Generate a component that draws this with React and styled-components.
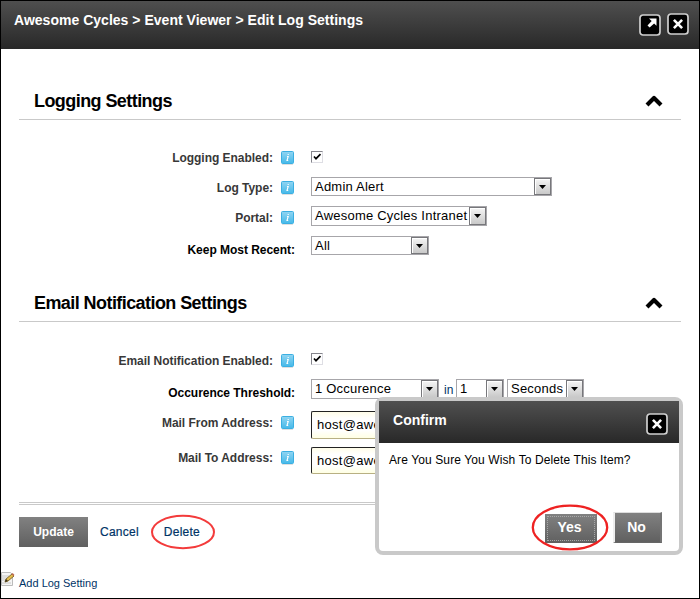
import React from 'react';
import styled, { createGlobalStyle } from 'styled-components';

const Global = createGlobalStyle`
  * { box-sizing: border-box; }
  body { margin: 0; background: #fff; font-family: "Liberation Sans", Arial, sans-serif; font-size: 12px; }
`;
const Page = styled.main`
  position: relative; width: 700px; height: 599px; border: 1px solid #000;
  background: #fff; overflow: hidden; display: flex; flex-direction: column;
`;
const TitleBar = styled.header`
  height: 48px; flex: none; display: flex; justify-content: space-between;
  padding: 12px 10px 0 13px; background: linear-gradient(#4f4f4f, #282828);
`;
const Title = styled.h1`
  margin: 0; color: #fff; font-size: 14px; line-height: 15px; font-weight: bold;
  letter-spacing: .02px; white-space: nowrap;
`;
const Tools = styled.div`display: flex; gap: 6px;`;
const IconButton = styled.button`
  width: 22px; height: 22px; padding: 0; border: 0; background: none;
  margin-top: ${p => p.$drop || 0}px; svg { display: block; }
`;
const Content = styled.div`padding: 0 18px; width: 698px;`;
const SectionHead = styled.div`
  display: flex; justify-content: space-between; height: 34px;
  margin-top: ${p => p.$top}px; padding: 4px 18px 0 15px; border-bottom: 1px solid #c9c9c9;
  svg { margin-top: 4px; }
`;
const Heading = styled.h2`
  margin: 0; font-size: 18px; line-height: 22px; color: #000; letter-spacing: -.57px; white-space: nowrap;
`;
const Fields = styled.div`padding-top: ${p => p.$top}px;`;
const Row = styled.div`display: flex; height: ${p => p.$height}px; align-items: flex-start;`;
const Label = styled.label`
  flex: none; width: ${p => p.$plain ? 276 : 254}px; margin-right: ${p => p.$plain ? 16 : 8}px; padding-top: ${p => p.$drop || 0}px;
  text-align: right; font-weight: bold; line-height: 14px; white-space: nowrap;
  color: ${p => p.$plain ? '#000' : '#383838'}; letter-spacing: -.03px;
`;
const InfoSlot = styled.span`flex: none; width: 30px; padding-top: ${p => p.$drop || 0}px; svg { display: block; }`;
const Check = styled.span`
  width: 12px; height: 12px; border: 1px solid #dedee4; border-top-color: #85858c; border-left-color: #85858c;
  svg { display: block; }
`;
const SelectBox = styled.div`
  flex: none; display: flex; justify-content: space-between; width: ${p => p.$width}px; height: ${p => p.$height || 19}px;
  border: 1px solid #a7a6aa; background: #fff; color: #000; font-size: 13px; line-height: ${p => p.$height === 20 ? 18 : 17}px;
  padding-left: 3px; white-space: nowrap; letter-spacing: .22px;
`;
const Arrow = styled.span`
  width: 17px; border: 1px solid #77777b; background: linear-gradient(#f5f5f5, #c9c9c9);
  box-shadow: inset 1px 1px #fff; display: flex; align-items: center; justify-content: center;
`;
const Threshold = styled.div`display: flex; align-items: flex-start;`;
const LastField = styled.div`margin-left: 3px;`;
const Between = styled.span`width: 17px; padding: 4px 0 0 5px; font-size: 12px; line-height: 14px; color: #003366;`;
const Email = styled.div`
  width: 80px; height: ${p => p.$height}px; border: 1px solid #b8b083; border-top-color: #222; border-left-color: #222;
  border-radius: 2px; padding: 5px 5px; font-size: 13px; line-height: 15px; letter-spacing: .3px;
  background: linear-gradient(#fffde9, #fff 25%, #fff 70%, #ffffe3);
`;
const Actions = styled.div`
  border-top: 3px double #c9c9c9; height: 70px; padding-top: 12px; display: flex; align-items: flex-start;
`;
const ActionButton = styled.button`
  width: ${p => p.$width}px; height: 30px; padding: 0; border: 0; color: #fff;
  background: linear-gradient(#818181, #606060); font: bold ${p => p.$size || 12}px "Liberation Sans", Arial, sans-serif;
`;
const ActionLink = styled.a`
  position: relative; margin-left: ${p => p.$left}px; margin-top: 8px; line-height: 14px; color: #003366;
  letter-spacing: .25px; -webkit-text-stroke: .2px #003366;
`;
const Ring = styled.svg`position: absolute; overflow: visible; pointer-events: none; left: ${p => p.$left}px; top: ${p => p.$top}px;`;
const AddLink = styled.a`
  display: flex; align-items: flex-start; gap: 4px; color: #003366; font-size: 11px; line-height: 14px;
  svg { flex: none; margin-top: -1px; } span { padding-top: 4px; }
`;
const Dialog = styled.section`
  position: absolute; left: 374px; top: 396px; width: 308px; height: 158px; border: 4px solid #c9c9c9;
  border-radius: 8px; background: #fff;
`;
const DialogHeader = styled.div`
  height: 42px; display: flex; justify-content: space-between; padding: 12px 11px 0 14px;
  background: linear-gradient(#505050, #282828);
`;
const Message = styled.p`margin: 10px 0 0 10px; line-height: 14px; color: #000; letter-spacing: .11px; white-space: nowrap;`;
const DialogActions = styled.div`display: flex; justify-content: flex-end; gap: 16px; padding: 45px 17px 0 0;`;
const YesWrap = styled.div`position: relative; padding-top: 2px;`;
const YesButton = styled(ActionButton)`height: 29px; outline: 1px dotted #a8a8a8; outline-offset: -3px; padding: 0 3px 3px 0;`;
const NoButton = styled(ActionButton)`
  height: 31px; border: 1px solid #666; border-top-color: #ddd; border-left: 2px solid #eee;
  border-right: 2px solid #747474; padding: 0 2px 2px 0;
`;

const Chevron = () => <svg width="18" height="13" viewBox="0 0 18 13"><path d="m2 11 7-7 7 7" fill="none" stroke="#000" strokeWidth="4.2" strokeLinejoin="round" /></svg>;
const Close = () => <svg width="22" height="22"><rect x="1" y="1" width="20" height="20" rx="3" fill="#000" stroke="#cfcfcf" strokeWidth="1.7" /><path d="m6.9 6.9 8.2 8.2m0-8.2-8.2 8.2" stroke="#fff" strokeWidth="2.6" /></svg>;
const Expand = () => <svg width="22" height="22"><rect x="1" y="1" width="20" height="20" rx="3" fill="#000" stroke="#cfcfcf" strokeWidth="1.7" /><path d="M10 4.5h7.5v7.2l-2.4-2.2-4.5 4.1-2.1-2.1 4.2-4.4Z" fill="#fff" /></svg>;
const Info = () => (
  <svg width="13" height="14">
    <defs><linearGradient id="infoBlue" x1="0" y1="0" x2="0" y2="1"><stop stopColor="#91d5f2" /><stop offset="1" stopColor="#45b9e9" /></linearGradient></defs>
    <path d="M1 13.5h11" stroke="#e0e0e0" />
    <rect x=".5" y=".5" width="12" height="12" rx="1" fill="url(#infoBlue)" stroke="#3bafe2" />
    <path d="M6 5.5h1.2L6 9.5h1.2M7.2 3v1" fill="none" stroke="#fff" strokeWidth="1.1" />
  </svg>
);
const Tick = () => <svg width="10" height="10"><path d="m2 4.5 2 2.2L8.5 2.2" fill="none" stroke="#000" strokeWidth="1.7" /></svg>;
const Pencil = () => (
  <svg width="14" height="16" viewBox="0 0 14 16">
    <path d="M.5 1.5h9l2 2v11H.5Z" fill="#f5f5f5" stroke="#bbb" /><path d="M1 5h7M1 7h5M1 9h4M1 12h9" stroke="#c8c8c8" />
    <path d="m4 11 1-3 6-5 2 2-6 5Z" fill="#e4bd4c" stroke="#836b31" /><path d="m4 11 1-3 2 2Z" fill="#3b3521" />
    <path d="m10.5 3 1.2-1 1.8 2-1.3 1Z" fill="#c16b52" />
  </svg>
);

function Select({ children, ...rest }) {
  return <SelectBox {...rest}><span>{children}</span><Arrow><svg width="7" height="4"><path d="M0 0h7L3.5 4Z" /></svg></Arrow></SelectBox>;
}
function InfoLabel({ children, drop = 0 }) {
  return <><Label $drop={drop}>{children}</Label><InfoSlot $drop={drop}><Info /></InfoSlot></>;
}

export default function App() {
  return (
    <>
      <Global />
      <Page>
        <TitleBar>
          <Title>Awesome Cycles &gt; Event Viewer &gt; Edit Log Settings</Title>
          <Tools><IconButton $drop={1}><Expand /></IconButton><IconButton><Close /></IconButton></Tools>
        </TitleBar>
        <Content>
          <SectionHead $top={37}><Heading>Logging Settings</Heading><Chevron /></SectionHead>
          <Fields $top={31}>
            <Row $height={26}><InfoLabel>Logging Enabled:</InfoLabel><Check><Tick /></Check></Row>
            <Row $height={29}><InfoLabel drop={4}>Log Type:</InfoLabel><Select $width={241}>Admin Alert</Select></Row>
            <Row $height={30}><InfoLabel drop={5}>Portal:</InfoLabel><Select $width={176} $height={20}>Awesome Cycles Intranet</Select></Row>
            <Row $height={19}><Label $plain $drop={7}>Keep Most Recent:</Label><Select $width={118}>All</Select></Row>
          </Fields>
          <SectionHead $top={33}><Heading>Email Notification Settings</Heading><Chevron /></SectionHead>
          <Fields $top={31}>
            <Row $height={26}><InfoLabel drop={1}>Email Notification Enabled:</InfoLabel><Check><Tick /></Check></Row>
            <Row $height={32}>
              <Label $plain $drop={7}>Occurence Threshold:</Label>
              <Threshold>
                <Select $width={128} $height={20}>1 Occurence</Select><Between>in</Between>
                <Select $width={48} $height={20}>1</Select>
                <LastField><Select $width={77} $height={20}>Seconds</Select></LastField>
              </Threshold>
            </Row>
            <Row $height={36}><InfoLabel drop={5}>Mail From Address:</InfoLabel><Email $height={28}>host@awe</Email></Row>
            <Row $height={55}><InfoLabel drop={4}>Mail To Address:</InfoLabel><Email $height={27}>host@awe</Email></Row>
          </Fields>
          <Actions>
            <ActionButton $width={69}>Update</ActionButton>
            <ActionLink $left={12}>Cancel</ActionLink>
            <ActionLink $left={25}>Delete<Ring $left={-13} $top={-10} width="64" height="35"><ellipse cx="32" cy="17" rx="31" ry="16.2" fill="none" stroke="#f33b3b" strokeWidth="2" /></Ring></ActionLink>
          </Actions>
        </Content>
        <AddLink><Pencil /><span>Add Log Setting</span></AddLink>
        <Dialog role="dialog">
          <DialogHeader><Title>Confirm</Title><IconButton><Close /></IconButton></DialogHeader>
          <Message>Are You Sure You Wish To Delete This Item?</Message>
          <DialogActions>
            <YesWrap><YesButton $width={52} $size={14}>Yes</YesButton><Ring $left={-13} $top={-7} width="76" height="46"><ellipse cx="38" cy="22.5" rx="37.2" ry="21.8" fill="none" stroke="#ee2222" strokeWidth="2.3" /></Ring></YesWrap>
            <NoButton $width={49} $size={14}>No</NoButton>
          </DialogActions>
        </Dialog>
      </Page>
    </>
  );
}
